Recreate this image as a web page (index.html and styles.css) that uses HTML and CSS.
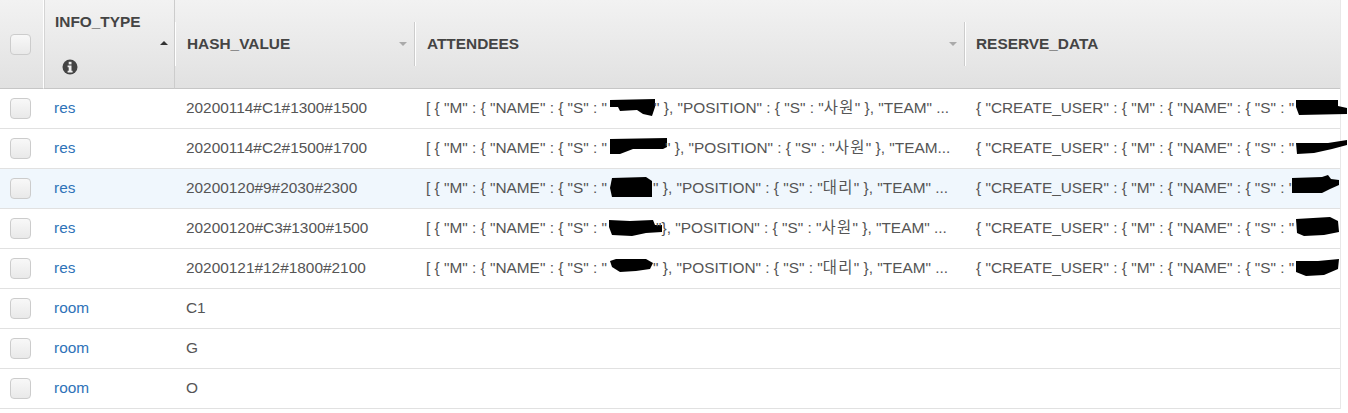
FILE: index.html
```html
<!DOCTYPE html>
<html lang="ko">
<head>
    <meta charset="UTF-8">
    <title>Items</title>
    <link rel="stylesheet" href="styles.css">
</head>
<body>
    <table class="grilla">
        <colgroup>
            <col class="col_check"><col class="col_tipo"><col class="col_hash"><col class="col_asist"><col class="col_reserva">
        </colgroup>
        <thead>
            <tr>
                <th class="th_check"><span class="caja"></span></th>
                <th class="th_tipo">
                    <div class="tipo_titulo">INFO_TYPE</div>
                    <span class="flecha_arriba"></span>
                    <svg class="info" viewBox="0 0 16 16" width="16" height="16"><circle cx="8" cy="8" r="7.5" fill="#444"/><rect x="6.7" y="2.8" width="2.8" height="2.6" fill="#eee"/><path d="M5.6 6.6h3.9v5.2h1.1v1.6H5.6v-1.6h1.1V8.2H5.6z" fill="#eee"/></svg>
                </th>
                <th><div class="celda_th">HASH_VALUE<span class="flecha_abajo"></span></div></th>
                <th><div class="celda_th">ATTENDEES<span class="flecha_abajo"></span></div></th>
                <th class="th_ultima"><div class="celda_th">RESERVE_DATA</div></th>
            </tr>
        </thead>
        <tbody>
            <tr>
                <td><span class="caja"></span></td>
                <td class="td_tipo"><a href="#">res</a></td>
                <td>20200114#C1#1300#1500</td>
                <td><div class="corta">[ { "M" : { "NAME" : { "S" : "<svg class="tachado" width="47" height="20" viewBox="0 0 47 20"><path d="M3 3 48 2 48 10 45 19 36 17 30 13 13 14 11 10 3 10Z"/></svg>" }, "POSITION" : { "S" : "<span class="kor">사원</span>" }, "TEAM" ...</div></td>
                <td class="abierta">{ "CREATE_USER" : { "M" : { "NAME" : { "S" : "<svg class="tachado" width="50" height="20" viewBox="0 0 50 20"><path d="M2 3 44 3 44 9 53 11 53 17 5 18 2 10Z"/></svg></td>
            </tr>
            <tr>
                <td><span class="caja"></span></td>
                <td class="td_tipo"><a href="#">res</a></td>
                <td>20200114#C2#1500#1700</td>
                <td><div class="corta">[ { "M" : { "NAME" : { "S" : "<svg class="tachado" width="58" height="20" viewBox="0 0 58 20"><path d="M3 2 60 1 60 10 56 12 26 12 13 17 3 17Z"/></svg>" }, "POSITION" : { "S" : "<span class="kor">사원</span>" }, "TEAM...</div></td>
                <td class="abierta">{ "CREATE_USER" : { "M" : { "NAME" : { "S" : "<svg class="tachado" width="51" height="20" viewBox="0 0 51 20"><path d="M2 6 34 6 53 3 53 8 38 12 20 16 3 17Z"/></svg></td>
            </tr>
            <tr class="marcada">
                <td><span class="caja"></span></td>
                <td class="td_tipo"><a href="#">res</a></td>
                <td>20200120#9#2030#2300</td>
                <td><div class="corta">[ { "M" : { "NAME" : { "S" : "<svg class="tachado" width="46" height="20" viewBox="0 0 46 20"><path d="M5 1 39 0 45 4 45 20 5 20 3 11Z"/></svg>" }, "POSITION" : { "S" : "<span class="kor">대리</span>" }, "TEAM" ...</div></td>
                <td class="abierta">{ "CREATE_USER" : { "M" : { "NAME" : { "S" : "<svg class="tachado" width="46" height="20" viewBox="0 0 46 20"><path d="M-2 1 28 0 34-2 37 2 45 3 45 8 36 12 28 16-2 16Z"/></svg></td>
            </tr>
            <tr>
                <td><span class="caja"></span></td>
                <td class="td_tipo"><a href="#">res</a></td>
                <td>20200120#C3#1300#1500</td>
                <td><div class="corta">[ { "M" : { "NAME" : { "S" : "<svg class="tachado" width="49" height="20" viewBox="0 0 49 20"><path d="M2 3 23 4 46 3 48 8 55 8 55 15 39 16 25 19 5 18 2 10Z"/></svg>"}, "POSITION" : { "S" : "<span class="kor">사원</span>" }, "TEAM" ...</div></td>
                <td class="abierta">{ "CREATE_USER" : { "M" : { "NAME" : { "S" : "<svg class="tachado" width="43" height="20" viewBox="0 0 43 20"><path d="M2 2 36 0 44 4 45 15 30 18 10 19 3 16Z"/></svg></td>
            </tr>
            <tr>
                <td><span class="caja"></span></td>
                <td class="td_tipo"><a href="#">res</a></td>
                <td>20200121#12#1800#2100</td>
                <td><div class="corta">[ { "M" : { "NAME" : { "S" : "<svg class="tachado" width="46" height="20" viewBox="0 0 46 20"><path d="M3 4 9 2 39 2 46 6 43 12 29 14 13 15 5 10Z"/></svg>" }, "POSITION" : { "S" : "<span class="kor">대리</span>" }, "TEAM" ...</div></td>
                <td class="abierta">{ "CREATE_USER" : { "M" : { "NAME" : { "S" : "<svg class="tachado" width="45" height="20" viewBox="0 0 45 20"><path d="M2 4 24 4 45 2 44 12 30 18 12 19 2 15Z"/></svg></td>
            </tr>
            <tr>
                <td><span class="caja"></span></td>
                <td class="td_tipo"><a href="#">room</a></td>
                <td>C1</td><td></td><td></td>
            </tr>
            <tr>
                <td><span class="caja"></span></td>
                <td class="td_tipo"><a href="#">room</a></td>
                <td>G</td><td></td><td></td>
            </tr>
            <tr>
                <td><span class="caja"></span></td>
                <td class="td_tipo"><a href="#">room</a></td>
                <td>O</td><td></td><td></td>
            </tr>
        </tbody>
    </table>
</body>
</html>
```

FILE: styles.css
```css
* {
    box-sizing: border-box;
}
body {
    margin: 0;
    background-color: #fff;
    color: #555;
    font-family: "Liberation Sans", "Noto Sans CJK KR", Arial, sans-serif;
    font-size: 15.4px;
}
.grilla {
    width: 1341px;
    table-layout: fixed;
    border-collapse: separate;
    border-spacing: 0;
    border-right: 1px solid #e8e8e8;
}
.col_check { width: 44px; }
.col_tipo { width: 131px; }
.col_hash { width: 240px; }
.col_asist { width: 550px; }
.col_reserva { width: 375px; }

th {
    height: 89px;
    padding: 0;
    text-align: left;
    vertical-align: middle;
    font-weight: bold;
    color: #444;
    background: linear-gradient(#f2f2f2, #e1e1e1);
    border-bottom: 1px solid #c6c6c6;
}
.celda_th {
    position: relative;
    display: flex;
    align-items: center;
    height: 44px;
    padding-left: 11px;
    border-left: 1px solid #fff;
    border-right: 1px solid #ccc;
}
.th_ultima .celda_th {
    padding-left: 10px;
    border-right: 0;
}
.th_check {
    padding-left: 10px;
    border-right: 1px solid #fff;
}
.th_tipo {
    position: relative;
    padding-left: 11px;
    border-right: 1px solid #ccc;
    box-shadow: inset 1px 0 0 #d4d4d4;
}
.tipo_titulo {
    position: absolute;
    top: 13px;
    left: 11px;
}
.flecha_arriba {
    position: absolute;
    top: 41px;
    right: 6px;
    border-left: 4.5px solid transparent;
    border-right: 4.5px solid transparent;
    border-bottom: 4px solid #333;
}
.flecha_abajo {
    position: absolute;
    top: 20px;
    right: 7px;
    border-left: 4.5px solid transparent;
    border-right: 4.5px solid transparent;
    border-top: 4px solid #aaa;
}
.info {
    position: absolute;
    top: 59px;
    left: 18px;
}

td {
    height: 40px;
    padding: 0 0 2px 11px;
    white-space: nowrap;
    line-height: 20px;
    border-bottom: 1px solid #e1e1e1;
    overflow: hidden;
}
td:first-child {
    padding: 0 0 0 10px;
}
td.td_tipo {
    padding-left: 10px;
}
td.abierta {
    overflow: visible;
}
.marcada td {
    background-color: #f0f7fd;
}
.corta {
    height: 20px;
    white-space: nowrap;
}
.kor {
    letter-spacing: 1.4px;
}
a {
    color: #2e73b8;
    text-decoration: none;
}
.caja {
    display: block;
    width: 21px;
    height: 21px;
    border: 1px solid #ccc;
    border-radius: 4px;
    background: linear-gradient(#f8f8f8, #e9e9e9);
}
.tachado {
    vertical-align: middle;
    margin: -6px 0 -4px;
    overflow: visible;
}
```
